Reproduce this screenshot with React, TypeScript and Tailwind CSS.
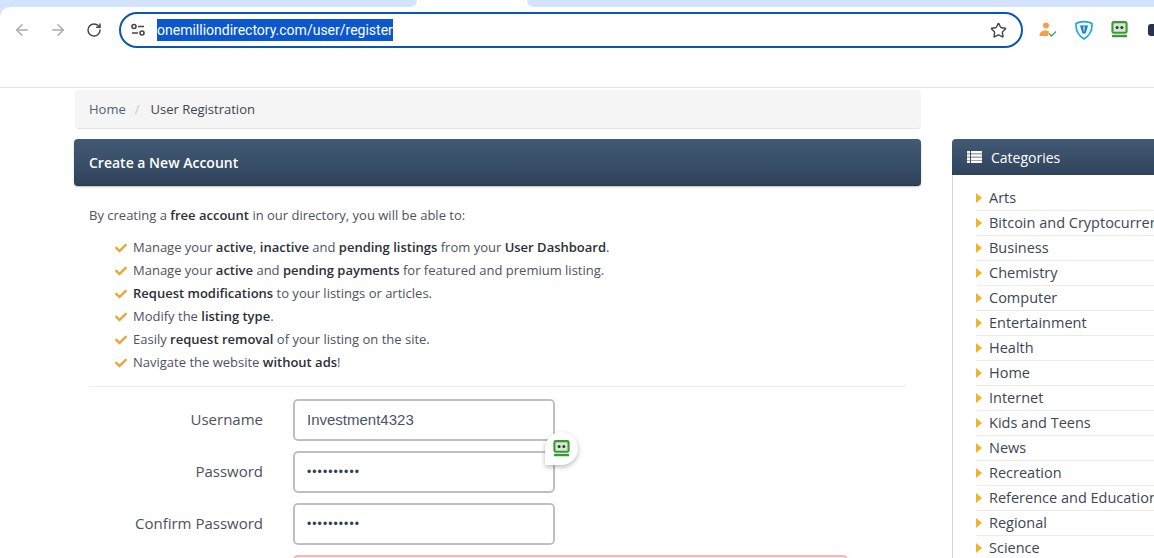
import React from 'react';
import { ArrowLeft, ArrowRight, RotateCw, Star } from 'lucide-react';
import { FaCheck } from 'react-icons/fa';

const benefits: React.ReactNode[] = [
  <>Manage your <b>active</b>, <b>inactive</b> and <b>pending listings</b> from your <b>User Dashboard</b>.</>,
  <>Manage your <b>active</b> and <b>pending payments</b> for featured and premium listing.</>,
  <><b>Request modifications</b> to your listings or articles.</>,
  <>Modify the <b>listing type</b>.</>,
  <>Easily <b>request removal</b> of your listing on the site.</>,
  <>Navigate the website <b>without ads</b>!</>,
];

const categories = [
  'Arts', 'Bitcoin and Cryptocurrency', 'Business', 'Chemistry', 'Computer', 'Entertainment', 'Health',
  'Home', 'Internet', 'Kids and Teens', 'News', 'Recreation', 'Reference and Education', 'Regional', 'Science',
];

const RoboIcon: React.FC<{ size?: number }> = ({ size = 18 }) => (
  <svg width={size} height={size} viewBox="0 0 18 18">
    <rect x="1.5" y="1.2" width="15" height="11.3" rx="1.5" fill="#d9e6d6" stroke="#3a9a34" strokeWidth="2.2" />
    <circle cx="6.5" cy="6.8" r="1.6" fill="#2f3d2f" />
    <circle cx="11.5" cy="6.8" r="1.6" fill="#2f3d2f" />
    <rect x="1" y="14.5" width="16" height="2.8" rx="1" fill="#3a9a34" />
  </svg>
);

const Toolbar: React.FC = () => (
  <div className="bg-[#d3e3fd] shrink-0">
    <div className="h-[81px] bg-white rounded-tl-[10px] border-b border-[#e3e3e3] flex items-start pt-[5px] pl-[13px] overflow-hidden">
      <ArrowLeft size={18} strokeWidth={2} className="shrink-0 text-[#a9abae] mt-[9px]" />
      <ArrowRight size={18} strokeWidth={2} className="shrink-0 text-[#a9abae] mt-[9px] ml-[18px]" />
      <RotateCw size={16} strokeWidth={2.2} className="shrink-0 text-[#444746] mt-[10px] ml-[19px]" />
      <div className="ml-[17px] w-[904px] h-[36px] rounded-full border-[2px] border-[#0b57b0] flex items-center pl-[9px] pr-[14px] shrink-0">
        <svg width="16" height="16" viewBox="0 0 16 16" fill="none" stroke="#444746" strokeWidth="1.6" className="shrink-0">
          <circle cx="4" cy="4.5" r="2" />
          <path d="M8 4.5h6" />
          <circle cx="12" cy="11" r="2" />
          <path d="M2 11h6" />
        </svg>
        <span className="ml-[11px] bg-[#0b57d0] text-white text-[14px] leading-[22px] font-['Roboto',sans-serif]">onemilliondirectory.com/user/register</span>
        <Star size={17} strokeWidth={2} className="shrink-0 ml-auto text-[#444746]" />
      </div>
      <div className="ml-[15px] mt-[9px] w-[20px] h-[18px] shrink-0">
        <svg width="20" height="18" viewBox="0 0 20 18">
          <circle cx="8" cy="4.5" r="3" fill="#f5a04a" />
          <path d="M1.5 15c0-4 2.5-5.5 6-5.5 1.5 0 2.6.3 3.5 1l-1 4.5z" fill="#f5a04a" />
          <path d="M11 12.5l2.5 2.5 4.5-4.5" fill="none" stroke="#4aa564" strokeWidth="1.5" />
        </svg>
      </div>
      <div className="ml-[17px] mt-[8px] shrink-0">
        <svg width="18" height="20" viewBox="0 0 18 20">
          <path d="M1 3.5C5 1 13 1 17 3.5c.5 7-2 12-8 15.500C3 15.500.5 10.500 1 3.500z" fill="#e8f6fd" stroke="#27a3d8" strokeWidth="1.600" />
          <path d="M5 5.500h8l-2.500 8h-3z" fill="#1e7fb5" />
          <path d="M8.200 6.500h1.600l-.5 5h-.6z" fill="#e8f6fd" />
        </svg>
      </div>
      <div className="ml-[18px] mt-[9px] shrink-0">
        <RoboIcon size={17} />
      </div>
      <div className="ml-[20px] mt-[12px] w-[8px] h-[12px] rounded-l-[3px] bg-[#26324f] shrink-0" />
    </div>
  </div>
);

const Field: React.FC<{ label: string; value: string; secret?: boolean }> = ({ label, value, secret }) => (
  <div className="flex items-center h-[42px]">
    <label className="w-[189px] pb-[2px] text-right text-[15px] text-[#4a5160]">{label}</label>
    <div className={`ml-[30px] w-[262px] h-[42px] rounded-[5px] border-[2px] border-[#bcc0c5] bg-white flex items-center pl-[12px] font-['Liberation_Sans',sans-serif] ${secret ? 'text-[12px] tracking-[1.1px] text-[#2f3d50]' : 'text-[15px] text-[#4a5568]'}`}>
      {value}
    </div>
  </div>
);

const Main: React.FC = () => (
  <div className="w-[847px] shrink-0">
    <div className="h-[39px] ml-px mt-[2px] pt-px bg-[#f5f5f5] rounded-[4px] border-b border-[#e4e4e4] flex items-center pl-[14px] text-[13px]">
      <span className="text-[#50617a]">Home</span>
      <span className="text-[#c4c6c9] ml-[9px]">/</span>
      <span className="text-[#3d4450] ml-[11px]">User Registration</span>
    </div>
    <div className="mt-[10px] h-[47px] rounded-[4px] bg-gradient-to-b from-[#435a75] to-[#2f435b] border-b border-[#26364a] shadow-[0_1px_2px_rgba(0,0,0,0.25)] flex items-center pl-[15px] text-white font-semibold text-[14px]">
      Create a New Account
    </div>
    <div className="px-[15px] pt-[20px] text-[13px] text-[#4c5361]">
      <p className="leading-[19px]">By creating a <b className="font-semibold text-[#2b2f38]">free account</b> in our directory, you will be able to:</p>
      <ul className="mt-[11px] ml-[26px] flex flex-col [&_b]:font-semibold [&_b]:text-[#2b2f38]">
        {benefits.map((item, i) => (
          <li key={i} className="h-[23px] flex items-center gap-[6px]">
            <FaCheck size={12} className="text-[#eda63b] shrink-0" />
            <span>{item}</span>
          </li>
        ))}
      </ul>
      <div className="mt-[12px] border-t border-[#eceded]" />
    </div>
    <div className="relative mt-[12px] flex flex-col gap-[10px]">
      <Field label="Username" value="Investment4323" />
      <Field label="Password" value="••••••••••" secret />
      <Field label="Confirm Password" value="••••••••••" secret />
      <div className="absolute left-[471px] top-[33px] w-[33px] h-[33px] rounded-full rounded-bl-[2px] bg-white shadow-[0_2px_5px_rgba(0,0,0,0.28)] flex items-center justify-center">
        <RoboIcon size={17} />
      </div>
      <div className="ml-[219px] w-[555px] h-[20px] rounded-t-[5px] border-[2px] border-[#f4b6b6] bg-[#fdf0f0]" />
    </div>
  </div>
);

const Sidebar: React.FC = () => (
  <div className="ml-[31px] w-[300px] shrink-0 mt-[51px]">
    <div className="h-[36px] rounded-t-[4px] bg-gradient-to-b from-[#435a75] to-[#2f435b] flex items-center pl-[15px] text-white text-[14px]">
      <svg width="15" height="12" viewBox="0 0 15 12" fill="white">
        <path d="M0 0h3v2.500H0zM4 0h11v2.500H4zM0 3.200h3v2.500H0zM4 3.200h11v2.500H4zM0 6.400h3v2.500H0zM4 6.400h11v2.500H4zM0 9.600h3V12H0zM4 9.600h11V12H4z" />
      </svg>
      <span className="ml-[9px]">Categories</span>
    </div>
    <div className="border-l border-[#d6d6d6] pl-[23px] pt-[11px]">
      {categories.map((name) => (
        <div key={name} className="h-[25px] border-b border-[#ececec] flex items-center text-[14.5px] font-medium text-[#3d4654] whitespace-nowrap">
          <span className="w-0 h-0 border-y-[5px] border-y-transparent border-l-[6px] border-l-[#f0b429] mr-[7px]" />
          {name}
        </div>
      ))}
    </div>
  </div>
);

const App: React.FC = () => (
  <div className="w-[1154px] h-[558px] overflow-hidden bg-white flex flex-col font-['Open_Sans',sans-serif]">
    <div className="h-[7px] shrink-0 bg-white flex">
      <div className="w-[417px] rounded-br-[10px] bg-[#d3e3fd]" />
      <div className="w-[110px] bg-white" />
      <div className="flex-1 rounded-bl-[10px] bg-[#d3e3fd]" />
    </div>
    <Toolbar />
    <div className="flex pl-[74px] flex-1 overflow-hidden">
      <Main />
      <Sidebar />
    </div>
  </div>
);

export default App;
